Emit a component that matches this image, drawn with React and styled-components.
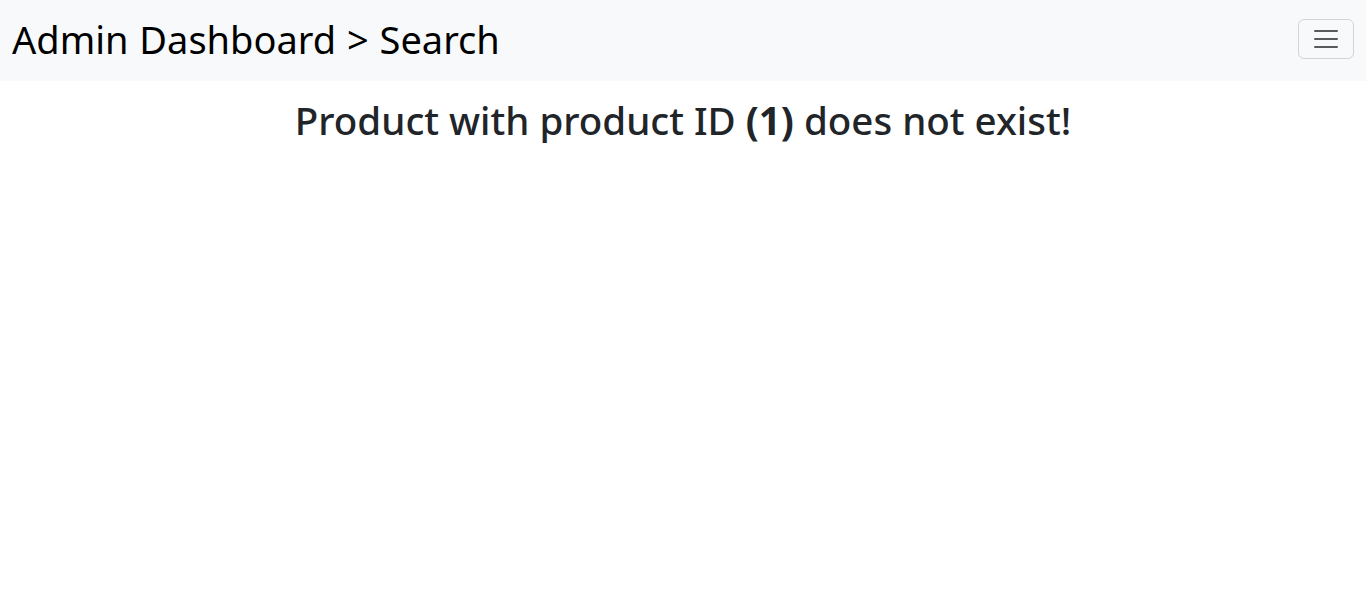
import React from 'react';
import styled, { createGlobalStyle } from 'styled-components';

const GlobalStyle = createGlobalStyle`
  body {
    margin: 0;
    font-family: "Noto Sans", "Open Sans", sans-serif;
    color: #212529;
    background: #fff;
  }
`;

export default function App () {
  return (
    <>
      <GlobalStyle/>
      <Navbar>
        <Brand href="#">Admin Dashboard &gt; Search</Brand>
        <Toggler aria-label="Toggle navigation">
          <TogglerIcon viewBox="0 0 30 30">
            <path
              stroke="rgba(33, 37, 41, 0.75)"
              strokeLinecap="round"
              strokeMiterlimit="10"
              strokeWidth="2"
              d="M4 7h22M4 15h22M4 23h22"
            />
          </TogglerIcon>
        </Toggler>
      </Navbar>
      <Main>
        <Message>Product with product ID <b>(1)</b> does not exist!</Message>
      </Main>
    </>
  );
}

const Navbar = styled.nav`
  height: 81px;
  box-sizing: border-box;
  display: flex;
  align-items: center;
  justify-content: space-between;
  padding: 0 12px 0 12px;
  background: #f8f9fa;
`;

const Brand = styled.a`
  font-size: 38px;
  color: #000;
  text-decoration: none;
  line-height: 1.2;
  margin-top: -2px;
  word-spacing: 1px;
`;

const Toggler = styled.button`
  width: 56px;
  height: 40px;
  margin-top: -3px;
  display: flex;
  align-items: center;
  justify-content: center;
  padding: 0;
  background: transparent;
  border: 1px solid rgba(0, 0, 0, 0.15);
  border-radius: 6px;
`;

const TogglerIcon = styled.svg`
  width: 30px;
  height: 30px;
`;

const Main = styled.main`
  display: flex;
  justify-content: center;
  padding-top: 16px;
`;

const Message = styled.h2`
  margin: 0;
  font-size: 38.5px;
  font-weight: 500;
  line-height: 1.2;

  b {
    font-weight: 700;
  }
`;
